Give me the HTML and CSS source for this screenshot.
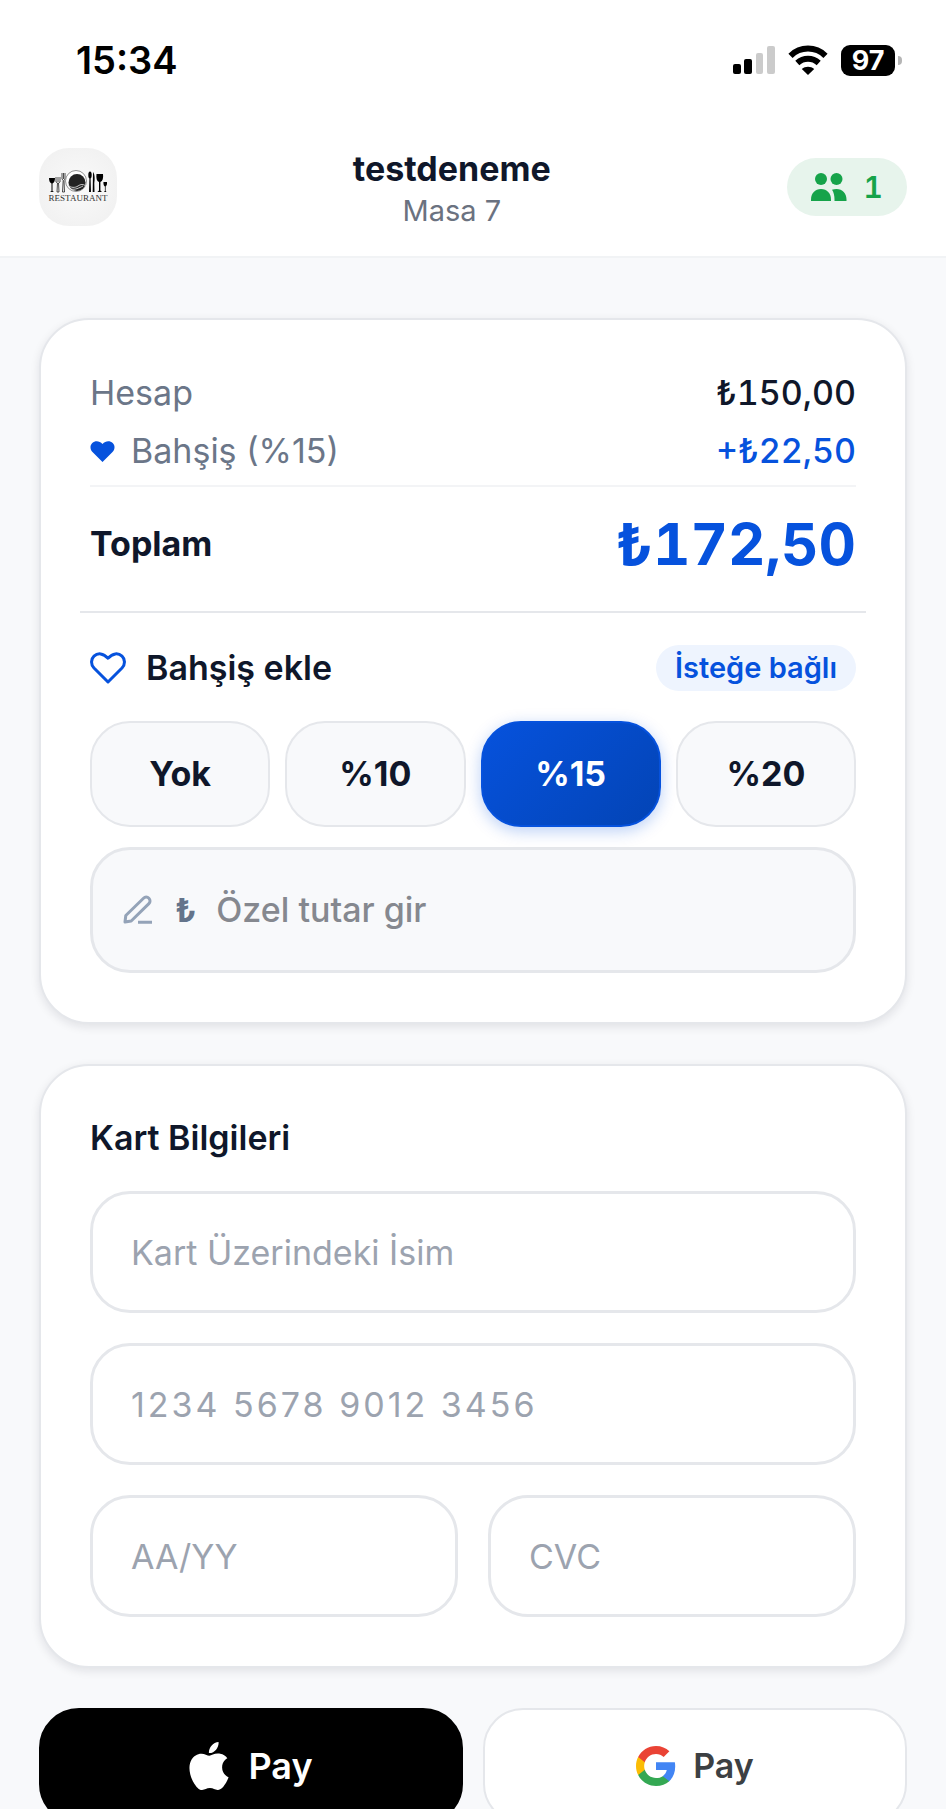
FILE: index.html
```html
<!DOCTYPE html>
<html lang="tr">
<head>
<meta charset="utf-8">
<meta name="viewport" content="width=device-width, initial-scale=1">
<title>testdeneme – Masa 7</title>
<link rel="stylesheet" href="styles.css">
</head>
<body>
<div class="app">
  <div class="status-bar">
    <time class="status-time">15:34</time>
    <div class="status-icons">
      <svg class="icon-signal" viewBox="0 0 42 28" aria-hidden="true">
        <rect x="0" y="18" width="8" height="10" rx="2"/>
        <rect x="11" y="13" width="8" height="15" rx="2"/>
        <g fill="#cbcbcb"><rect x="23" y="7" width="7" height="21" rx="2"/><rect x="34" y="0" width="8" height="28" rx="2"/></g>
      </svg>
      <svg class="icon-wifi" viewBox="0 0 40 30" aria-hidden="true">
        <path d="M20 30l-6.200-6.100c3.400-3 9-3 12.400 0z"/>
        <path d="M2.500 10.800c9.900-9.600 25.100-9.600 35 0M9.300 18c6.200-5.600 15.200-5.600 21.400 0" fill="none" stroke="#000" stroke-width="6"/>
      </svg>
      <div class="battery"><span class="battery-level">97</span><span class="battery-cap"></span></div>
    </div>
  </div>

  <header class="header">
    <div class="logo">
      <svg class="logo-art" viewBox="0 0 58 24" aria-hidden="true">
        <path d="M0 8h6c0 3-1 5-2.500 5.500V21l1.500 1H1l1.500-1v-7.500C1 13 0 11 0 8z"/>
        <path d="M7 7v5l1.500 1L8 22h2l-.5-9 1.500-1V7M9 7v5M13 3v6l1.200 1.500L13.500 22h2L15 10.500 16 9V3M14.500 3v6" fill="none" stroke="#222" stroke-width=".8"/>
        <circle cx="27" cy="11" r="10.500" fill="#fff" stroke="#777" stroke-width=".8"/>
        <circle cx="28" cy="12.500" r="8.500" fill="#222"/>
        <path d="M19 15c3 3 7 3 10 1s5-2 8 0M22 19c4 1 8-1 12-3" fill="none" stroke="#ddd" stroke-width=".9"/>
        <ellipse cx="41" cy="5" rx="1.700" ry="3.500"/><path d="M40.500 7h1l.5 15h-2z"/>
        <path d="M44 2c1.800 2 2 7 1.300 11l.2 9H43.700z"/>
        <path d="M47.500 4h6.500c.5 4-.3 7-2.600 8v8.500l1.600 1.500h-4.600l1.600-1.500V12c-2.300-1-3-4-2.500-8z"/>
        <path d="M54.500 12h3.500c.3 2.500-.4 4-1.400 4.500V21l1 1h-2.700l1-1v-4.500C54.900 16 54.200 14.500 54.500 12z"/>
      </svg>
      <span class="logo-text">RESTAURANT</span>
    </div>
    <div class="venue">
      <h1 class="venue-name">testdeneme</h1>
      <p class="venue-table">Masa 7</p>
    </div>
    <div class="guests">
      <svg class="icon-guests" viewBox="0 0 36 28" aria-hidden="true">
        <circle cx="10" cy="6" r="6"/><circle cx="25.500" cy="6" r="6"/>
        <path d="M0 28v-1.500C0 20.500 4 16 10 16s10 4.500 10 10.500V28z"/>
        <path d="M21 16.800c1.400-.6 2.900-.8 4.500-.8C31.500 16 35.500 20.500 35.500 26.500V28H23.500v-1.500c0-3.900-.7-7-2.500-9.700z"/>
      </svg>
      <span>1</span>
    </div>
  </header>

  <main class="content">
    <section class="card">
      <dl class="bill">
        <div class="bill-row"><dt>Hesap</dt><dd>₺150,00</dd></div>
        <div class="bill-row">
          <dt><svg class="icon-heart-small" viewBox="0 0 24 21" aria-hidden="true"><path d="M12 21L2 11C-.7 8.200-.6 4.300 1.800 2 4.500-.7 9-.5 12 3c3-3.500 7.500-3.700 10.200-1 2.400 2.300 2.500 6.200-.2 9z"/></svg>Bahşiş (%15)</dt>
          <dd class="bill-tip">+₺22,50</dd>
        </div>
        <div class="bill-total"><dt>Toplam</dt><dd>₺172,50</dd></div>
      </dl>
      <hr class="divider">
      <div class="tip-head">
        <h2 class="section-title"><svg class="icon-heart" viewBox="0 0 36 32" aria-hidden="true"><path d="M18 30L4 16C.6 12.400.8 7.200 4 4.200 7.800.6 13.200 1 18 6.200 22.800 1 28.200.6 32 4.200c3.200 3 3.400 8.200 0 11.800z"/></svg>Bahşiş ekle</h2>
        <span class="badge">İsteğe bağlı</span>
      </div>
      <div class="tip-options">
        <button class="tip" type="button">Yok</button>
        <button class="tip" type="button">%10</button>
        <button class="tip tip-active" type="button" aria-pressed="true">%15</button>
        <button class="tip" type="button">%20</button>
      </div>
      <label class="custom-tip">
        <svg class="icon-edit" viewBox="0 0 30 30" aria-hidden="true"><path d="M2 27l.8-6.500L20.500 3.200a3.800 3.800 0 0 1 5.400 5.400L8.200 26zM15 27.300h14"/></svg>
        <span class="currency">₺</span>
        <input class="custom-input" type="text" inputmode="decimal" placeholder="Özel tutar gir" aria-label="Özel tutar gir">
      </label>
    </section>

    <section class="card">
      <h2 class="section-title">Kart Bilgileri</h2>
      <form class="card-form">
        <input class="field" type="text" placeholder="Kart Üzerindeki İsim" aria-label="Kart Üzerindeki İsim">
        <input class="field field-number" type="text" inputmode="numeric" placeholder="1234 5678 9012 3456" aria-label="Kart numarası">
        <input class="field field-half" type="text" placeholder="AA/YY" aria-label="Son kullanma tarihi">
        <input class="field field-half" type="text" placeholder="CVC" aria-label="CVC">
      </form>
    </section>

    <div class="wallets">
      <button class="wallet wallet-apple" type="button">
        <svg class="icon-apple" viewBox="2 0 20 24" aria-hidden="true"><path d="M12.152 6.896c-.948 0-2.415-1.078-3.960-1.040-2.040.027-3.910 1.183-4.961 3.014-2.117 3.675-.546 9.103 1.519 12.090 1.013 1.454 2.208 3.090 3.792 3.039 1.520-.065 2.090-.987 3.935-.987 1.831 0 2.350.987 3.960.948 1.637-.026 2.676-1.480 3.676-2.948 1.156-1.688 1.636-3.325 1.662-3.415-.039-.013-3.182-1.221-3.220-4.857-.026-3.040 2.480-4.494 2.597-4.559-1.429-2.090-3.623-2.324-4.390-2.376-2-.156-3.675 1.090-4.610 1.090zM15.530 3.830c.843-1.012 1.400-2.427 1.245-3.830-1.207.052-2.662.805-3.532 1.818-.780.896-1.454 2.338-1.273 3.714 1.338.104 2.715-.688 3.559-1.701"/></svg>
        Pay
      </button>
      <button class="wallet" type="button">
        <svg class="icon-google" viewBox="1 1 22 22" aria-hidden="true">
          <path fill="#4285f4" d="M22.560 12.250c0-.780-.070-1.530-.200-2.250H12v4.260h5.920c-.260 1.370-1.040 2.530-2.210 3.310v2.770h3.570c2.080-1.920 3.280-4.740 3.280-8.090z"/>
          <path fill="#34a853" d="M12 23c2.970 0 5.460-.980 7.280-2.660l-3.570-2.770c-.980.660-2.230 1.060-3.710 1.060-2.860 0-5.290-1.930-6.160-4.530H2.180v2.840C3.990 20.530 7.700 23 12 23z"/>
          <path fill="#fbbc05" d="M5.840 14.090c-.220-.660-.350-1.360-.350-2.090s.130-1.430.350-2.090V7.070H2.180C1.430 8.550 1 10.220 1 12s.430 3.450 1.180 4.930z"/>
          <path fill="#ea4335" d="M12 5.380c1.620 0 3.060.560 4.210 1.640l3.150-3.150C17.450 2.090 14.970 1 12 1 7.700 1 3.990 3.470 2.180 7.070l3.660 2.840c.870-2.600 3.300-4.530 6.160-4.530z"/>
        </svg>
        Pay
      </button>
    </div>
  </main>
</div>
</body>
</html>
```
FILE: styles.css
```css
* { box-sizing: border-box; }

body, h1, h2, p, dl, dd { margin: 0; }

body {
  background: #f8f9fb;
  color: #0f172a;
  font-family: Inter, "Liberation Sans", sans-serif;
  font-size: 34px;
  line-height: 48px;
}

button, input { font: inherit; color: inherit; }

.app {
  display: flex;
  flex-direction: column;
  height: 100vh;
}

.status-bar {
  display: flex;
  justify-content: space-between;
  align-items: center;
  padding: 36px 44px 0 76px;
  background: #fff;
}

.status-time {
  color: #000;
  font-size: 38px;
  font-weight: 600;
}

.status-icons {
  display: flex;
  align-items: center;
  gap: 13px;
}

.icon-signal { width: 42px; height: 28px; }
.icon-wifi { width: 40px; height: 30px; }

.battery {
  display: flex;
  align-items: center;
  gap: 3px;
}

.battery-level {
  width: 54px;
  border-radius: 9px;
  background: #000;
  color: #fff;
  font-size: 27px;
  font-weight: 700;
  line-height: 31px;
  text-align: center;
}

.battery-cap {
  width: 4px;
  height: 9px;
  border-radius: 0 4px 4px 0;
  background: #b5b5b5;
}

.header {
  display: flex;
  justify-content: space-between;
  align-items: center;
  padding: 58px 39px 25px;
  border-bottom: 2px solid #f1f3f5;
  background: #fff;
}

.logo {
  display: flex;
  flex-direction: column;
  align-items: center;
  justify-content: center;
  width: 78px;
  height: 78px;
  border-radius: 30px;
  background: radial-gradient(#fafafa, #efefef);
}

.logo-art { width: 58px; height: 24px; }

.logo-text {
  color: #333;
  font-family: "Liberation Serif", serif;
  font-size: 9px;
  line-height: 9px;
}

.venue {
  padding-top: 5px;
  text-align: center;
}

.venue-name {
  font-size: 34px;
  font-weight: 700;
  line-height: 43px;
}

.venue-table {
  color: #6b7280;
  font-size: 29px;
  line-height: 41px;
}

.guests {
  display: flex;
  align-items: center;
  gap: 17px;
  padding: 5px 24px;
  border-radius: 29px;
  background: #e7f4ec;
  color: #16a34a;
  font-size: 30px;
  font-weight: 600;
  font-variant-numeric: tabular-nums;
}

.icon-guests { width: 36px; height: 28px; fill: currentColor; }

.content {
  display: flex;
  flex: 1;
  flex-direction: column;
  gap: 40px;
  min-height: 0;
  padding: 60px 39px 40px;
  overflow-y: auto;
  scrollbar-width: none;
}

.content > * { flex: none; }

.card {
  padding: 49px;
  border: 2px solid #e5e7eb;
  border-radius: 50px;
  background: #fff;
  box-shadow: 0 3px 10px rgba(15, 23, 42, 0.1);
}

.bill {
  display: flex;
  flex-direction: column;
  gap: 10px;
}

.bill-row, .bill-total {
  display: flex;
  justify-content: space-between;
  align-items: center;
}

.bill-row dt {
  display: flex;
  align-items: center;
  gap: 16px;
  color: #6b7688;
}

.bill dd { font-variant-numeric: tabular-nums; }
.bill-row dd { font-weight: 500; }
.bill-row .bill-tip { color: #0652dd; }

.bill-total {
  padding-top: 22px;
  border-top: 2px solid #f3f4f6;
  font-weight: 700;
}

.bill-total dd {
  color: #0652dd;
  font-size: 58px;
  line-height: 70px;
}

.icon-heart-small { width: 25px; height: 21px; fill: #0652dd; }

.divider {
  height: 2px;
  margin: 32px -10px;
  border: 0;
  background: #e5e7eb;
}

.tip-head {
  display: flex;
  justify-content: space-between;
  align-items: center;
}

.section-title {
  display: flex;
  align-items: center;
  gap: 20px;
  font-size: 34px;
  font-weight: 600;
  line-height: 46px;
}

.icon-heart {
  width: 36px;
  height: 32px;
  fill: none;
  stroke: #0652dd;
  stroke-width: 3;
  stroke-linejoin: round;
}

.badge {
  padding: 0 19px;
  border-radius: 23px;
  background: #eef4fe;
  color: #0652dd;
  font-size: 29px;
  font-weight: 600;
  line-height: 46px;
}

.tip-options {
  display: grid;
  grid-template-columns: repeat(4, 1fr);
  gap: 15px;
  margin: 30px 0 20px;
}

.tip {
  height: 106px;
  padding: 0;
  border: 2px solid #e5e7eb;
  border-radius: 40px;
  background: #f8f9fb;
  font-weight: 700;
}

.tip-active {
  border-color: #0652dd;
  background: linear-gradient(135deg, #0652dd, #0344b5);
  box-shadow: 0 4px 16px rgba(6, 82, 221, 0.28);
  color: #fff;
}

.custom-tip {
  display: flex;
  align-items: center;
  height: 126px;
  padding: 0 30px;
  border: 3px solid #e5e7eb;
  border-radius: 40px;
  background: #f8f9fb;
}

.icon-edit {
  width: 30px;
  height: 30px;
  fill: none;
  stroke: #94a3b8;
  stroke-width: 3;
  stroke-linejoin: round;
}

.currency {
  margin: 0 20px 0 22px;
  color: #64748b;
  font-size: 33px;
  font-weight: 700;
}

.custom-input {
  flex: 1;
  min-width: 0;
  padding: 0;
  border: 0;
  background: none;
  font-weight: 500;
}

.custom-input::placeholder { color: #85888f; opacity: 1; }

.card-form {
  display: grid;
  grid-template-columns: 1fr 1fr;
  gap: 30px;
  margin-top: 30px;
}

.field {
  grid-column: span 2;
  width: 100%;
  height: 122px;
  padding: 0 38px;
  border: 3px solid #e5e7eb;
  border-radius: 40px;
  background: #fff;
}

.field-number { letter-spacing: 3px; }
.field-half { grid-column: span 1; }
.field::placeholder { color: #9ca3af; opacity: 1; }

.wallets {
  display: grid;
  grid-template-columns: 1fr 1fr;
  gap: 20px;
}

.wallet {
  display: flex;
  align-items: center;
  justify-content: center;
  gap: 17px;
  height: 116px;
  border: 2px solid #e5e7eb;
  border-radius: 40px;
  background: #fff;
  color: #3c4043;
  font-weight: 600;
}

.wallet-apple {
  gap: 19px;
  border-color: #000;
  background: #000;
  color: #fff;
  font-size: 36px;
}

.icon-apple { width: 40px; height: 48px; fill: currentColor; }
.icon-google { width: 40px; height: 40px; }
```
